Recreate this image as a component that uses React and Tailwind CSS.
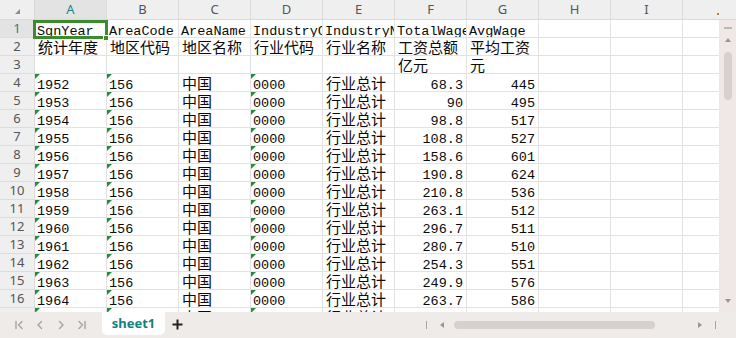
import React from 'react';

const COLS = ['A', 'B', 'C', 'D', 'E', 'F', 'G', 'H', 'I'];

const latin = { fontFamily: '"Liberation Mono", "Noto Sans CJK SC", monospace' };
const cjk = { fontFamily: '"Noto Sans CJK SC", "Liberation Sans", sans-serif' };
const ui = { fontFamily: '"Noto Sans", "Liberation Sans", "Noto Sans CJK SC", sans-serif' };

const wages = [
    ['1952', '68.3', '445'],
    ['1953', '90', '495'],
    ['1954', '98.8', '517'],
    ['1955', '108.8', '527'],
    ['1956', '158.6', '601'],
    ['1957', '190.8', '624'],
    ['1958', '210.8', '536'],
    ['1959', '263.1', '512'],
    ['1960', '296.7', '511'],
    ['1961', '280.7', '510'],
    ['1962', '254.3', '551'],
    ['1963', '249.9', '576'],
    ['1964', '263.7', '586'],
    ['1965', '285.0', '590'],
];

// each row: list of { v, right, tri } for columns A..G
const rows = [
    ['SgnYear', 'AreaCode', 'AreaName', 'IndustryCode', 'IndustryName', 'TotalWages', 'AvgWage'].map(v => ({ v })),
    ['统计年度', '地区代码', '地区名称', '行业代码', '行业名称', '工资总额', '平均工资'].map(v => ({ v })),
    ['', '', '', '', '', '亿元', '元'].map(v => ({ v })),
    ...wages.map(([year, total, avg]) => [
        { v: year, tri: true },
        { v: '156', tri: true },
        { v: '中国' },
        { v: '0000', tri: true },
        { v: '行业总计' },
        { v: total, right: true },
        { v: avg, right: true },
    ]),
];

const isCjk = (s) => /[\u4e00-\u9fff]/.test(s);

const Cell = ({ cell, selected }) => {
    const v = cell?.v || '';
    const zh = isCjk(v);
    return (
        <div className="relative w-[72px] h-[18px] shrink-0 border-r border-b border-[#e2e2e2] bg-white">
            <div className="absolute inset-0 overflow-hidden">
                {v && (
                    <div
                        className={`whitespace-nowrap text-[#0a0a0a] leading-[18px] ${zh ? 'text-[15px] pl-[3px]' : 'text-[13.5px] pt-[3px] pl-[2px]'} ${cell.right ? 'text-right pr-[3px]' : ''}`}
                        style={zh ? cjk : latin}
                    >
                        {v}
                    </div>
                )}
                {cell?.tri && (
                    <div className="absolute left-0 top-0 w-0 h-0 border-t-[5px] border-r-[5px] border-t-[#1f8f3a] border-r-transparent" />
                )}
            </div>
            {selected && (
                <>
                    <div className="absolute -left-[2px] top-0 -right-[2px] -bottom-[2px] border-[3px] border-[#3d8b2f] z-10" />
                    <div className="absolute -right-[3px] -bottom-[4px] w-[6px] h-[6px] bg-[#3d8b2f] border border-white z-20" />
                </>
            )}
        </div>
    );
};

const Chevron = ({ d }) => (
    <svg width="10" height="10" viewBox="0 0 10 10" fill="none" stroke="#a3a3a3" strokeWidth="1.4" strokeLinecap="round" strokeLinejoin="round">
        <path d={d} />
    </svg>
);

const App = () => {
    return (
        <div className="w-[736px] h-[338px] flex flex-col bg-white overflow-hidden select-none" style={ui}>
            {/* column headers */}
            <div className="flex h-[20px] shrink-0 bg-[#efefef] border-b border-[#d9d9d9]">
                <div className="relative w-[35px] shrink-0 border-r border-[#d9d9d9]">
                    <div className="absolute left-[15px] top-[9px] w-0 h-0 border-b-[5px] border-l-[5px] border-b-[#8c8c8c] border-l-transparent" />
                </div>
                {COLS.map(c => (
                    <div
                        key={c}
                        className={`w-[72px] shrink-0 border-r border-[#dcdcdc] text-[13px] leading-[19px] text-center ${c === 'A' ? 'bg-[#e3e3e3] text-[#13878b]' : 'text-[#555]'}`}
                    >
                        {c}
                    </div>
                ))}
                <div className="flex-1 relative">
                    <div className="absolute left-[34px] top-[13px] w-[2px] h-[2px] bg-[#b08a3a]" />
                </div>
            </div>

            {/* body */}
            <div className="flex h-[292px] shrink-0">
                <div className="w-[719px] overflow-hidden">
                    {rows.map((r, i) => (
                        <div key={i} className="flex h-[18px]">
                            <div
                                className={`w-[35px] shrink-0 h-[18px] border-r border-b border-[#dcdcdc] text-[13px] leading-[17px] text-center ${i === 0 ? 'bg-[#e3e3e3] text-[#13878b]' : 'bg-[#efefef] text-[#555]'}`}
                            >
                                {i + 1}
                            </div>
                            {COLS.map((c, j) => (
                                <Cell key={c} cell={r[j]} selected={i === 0 && j === 0} />
                            ))}
                            <div className="w-[36px] shrink-0 h-[18px] border-b border-[#e2e2e2]" />
                        </div>
                    ))}
                </div>

                {/* vertical scrollbar */}
                <div className="w-[17px] bg-[#efe8e6] flex flex-col items-center">
                    <div className="mt-[7px] w-[8px] h-[2px] bg-[#bdb8b6]" />
                    <div className="mt-[9px] w-0 h-0 border-l-[3px] border-r-[3px] border-b-[4px] border-l-transparent border-r-transparent border-b-[#9a9696]" />
                    <div className="mt-[10px] w-[8px] h-[48px] rounded-full bg-[#d6d1cf]" />
                    <div className="flex-1" />
                    <div className="mb-[9px] w-0 h-0 border-l-[3px] border-r-[3px] border-t-[4px] border-l-transparent border-r-transparent border-t-[#9a9696]" />
                </div>
            </div>

            {/* sheet tabs + horizontal scrollbar */}
            <div className="flex flex-1 bg-[#efebe9]">
                <div className="w-[102px] flex items-center pl-[14px] gap-[11px]">
                    <Chevron d="M2 1.5v7M8 1.5L4.5 5 8 8.5" />
                    <Chevron d="M6.5 1.5L3 5l3.5 3.5" />
                    <Chevron d="M3.5 1.5L7 5 3.5 8.5" />
                    <Chevron d="M2 1.5L5.5 5 2 8.5M8 1.5v7" />
                </div>
                <div className="w-[63px] h-[23px] bg-white rounded-b-[5px] flex items-center justify-center text-[13px] font-bold text-[#13807f]">
                    sheet1
                </div>
                <div className="w-[24px] flex items-center justify-center pb-[1px]">
                    <svg width="11" height="11" viewBox="0 0 11 11" stroke="#222" strokeWidth="2">
                        <path d="M5.5 0.5v10M0.5 5.5h10" />
                    </svg>
                </div>
                <div className="flex-1" />
                <div className="w-[316px] flex items-center">
                    <div className="ml-[6px] w-px h-[8px] bg-[#a8a4a2]" />
                    <div className="ml-[13px] w-0 h-0 border-t-[3px] border-b-[3px] border-r-[4px] border-t-transparent border-b-transparent border-r-[#9a9696]" />
                    <div className="ml-[10px] w-[201px] h-[8px] rounded-full bg-[#d6d1cf]" />
                    <div className="ml-[43px] w-0 h-0 border-t-[3px] border-b-[3px] border-l-[4px] border-t-transparent border-b-transparent border-l-[#9a9696]" />
                    <div className="ml-[13px] w-px h-[8px] bg-[#a8a4a2]" />
                </div>
            </div>
        </div>
    );
};

export default App;
